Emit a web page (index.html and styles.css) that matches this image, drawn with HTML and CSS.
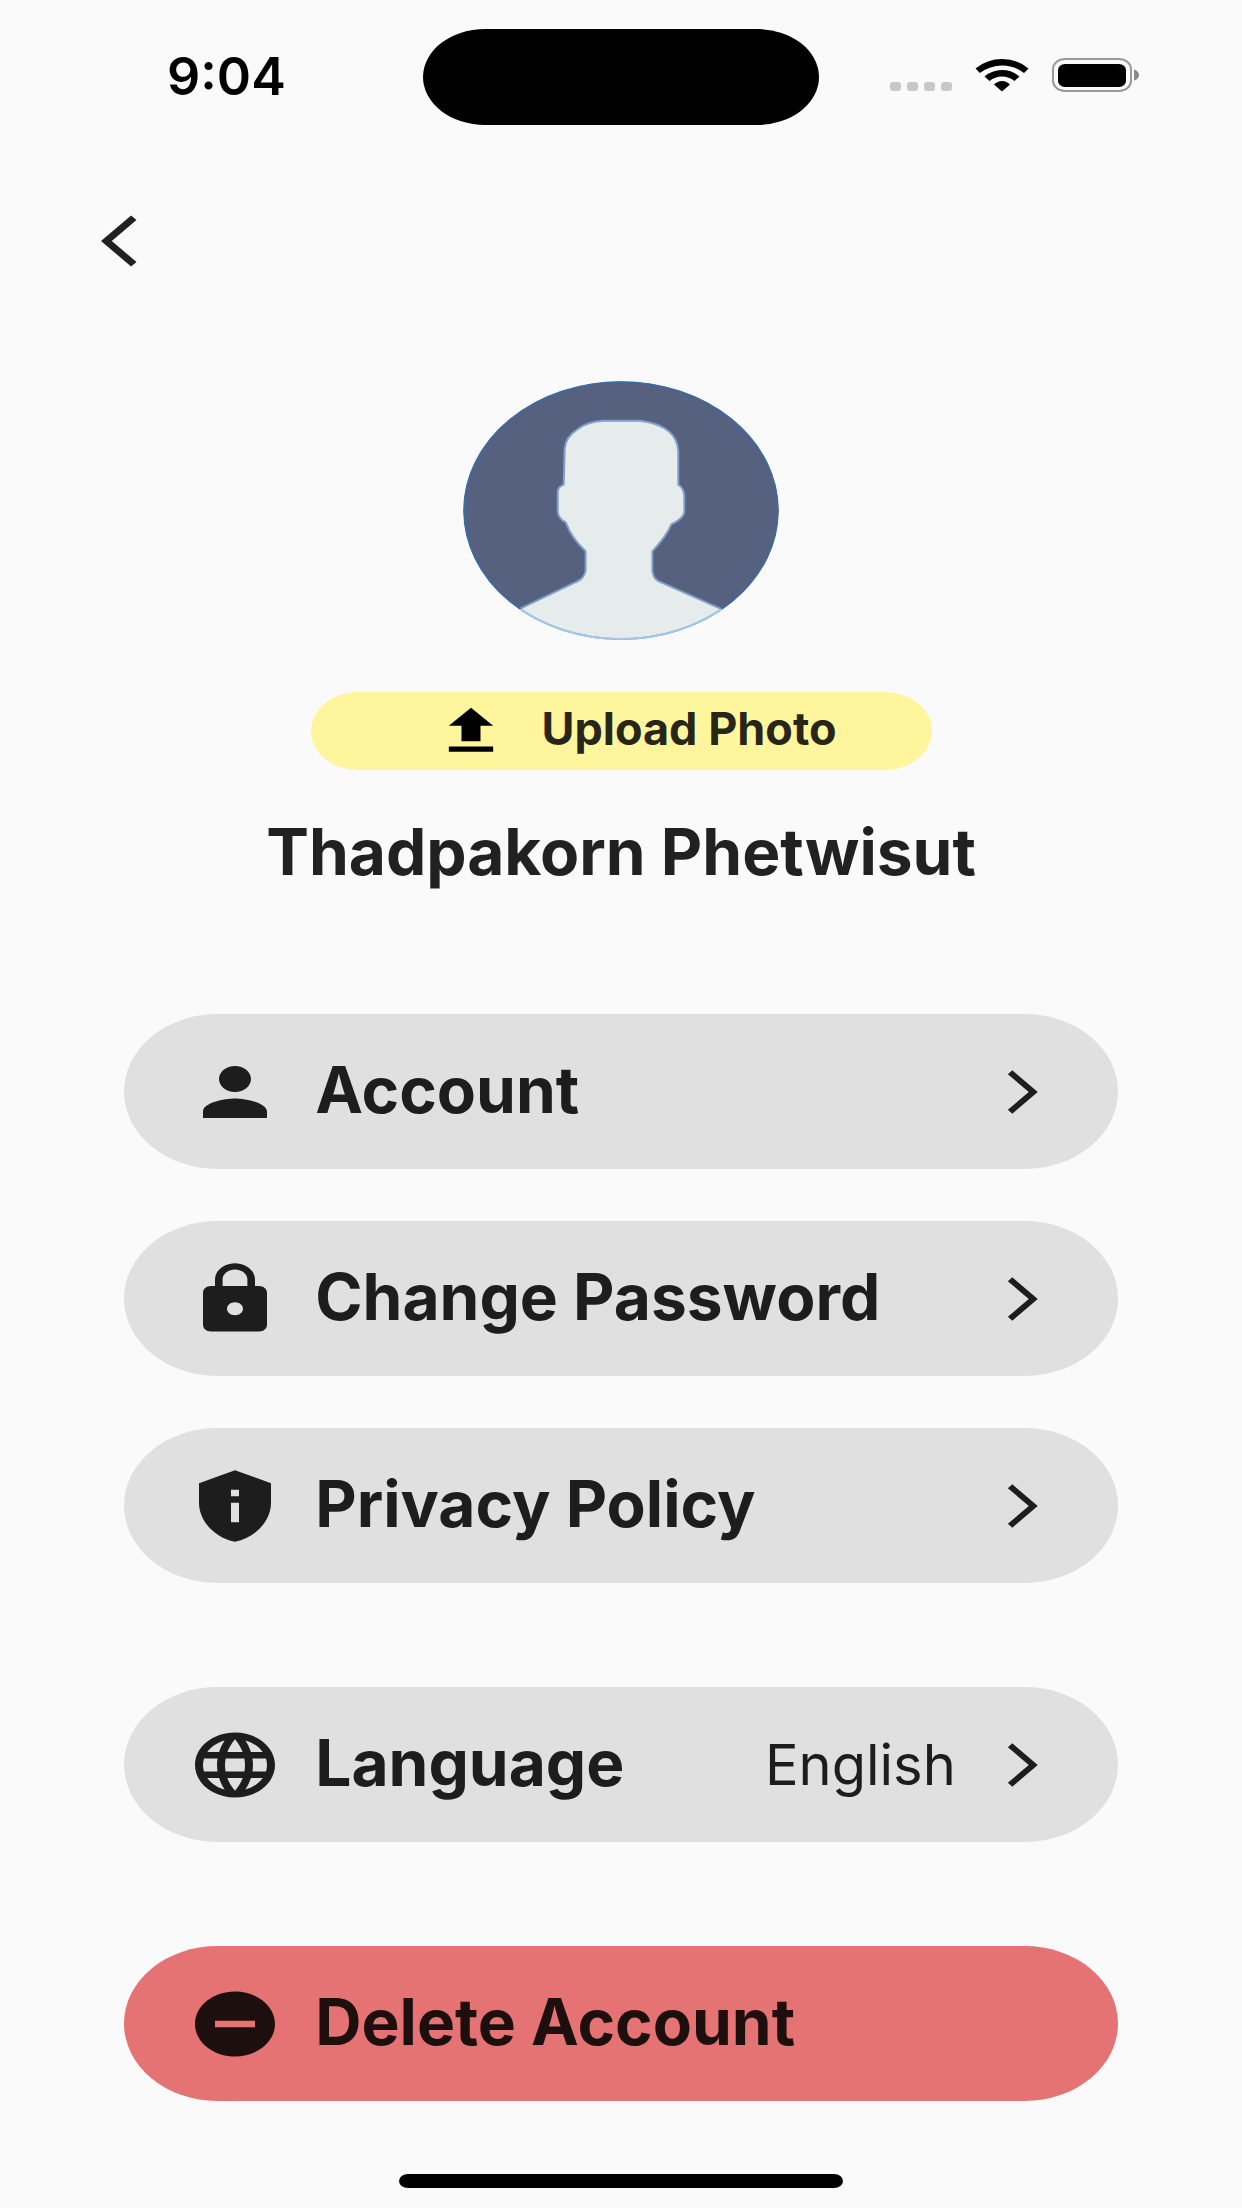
FILE: index.html
```html
<!DOCTYPE html>
<html lang="en">
<head>
<meta charset="utf-8">
<meta name="viewport" content="width=device-width, initial-scale=1">
<title>Profile</title>
<link rel="stylesheet" href="styles.css">
</head>
<body>
<div class="screen">
  <header class="status-bar">
    <time class="clock">9:04</time>
    <div class="island"></div>
    <div class="status-icons">
      <svg class="signal" viewBox="0 0 62 10" aria-hidden="true"><rect x="0" width="11" height="9" rx="3"/><rect x="17" width="11" height="9" rx="3"/><rect x="34" width="11" height="9" rx="3"/><rect x="51" width="11" height="9" rx="3"/></svg>
      <svg class="wifi" viewBox="0 0 54 33" aria-hidden="true"><path d="M0.500 9.500Q12 0 27 0T53.500 9.500L49 14Q39 6.500 27 6.500T5 14Z"/><path d="M9.500 17.500Q17 11 27 11T44.500 17.500L39.500 22Q34 17.500 27 17.500T14.500 22Z"/><path d="M19 25.500Q22.500 22 27 22T35 25.500L27 32.500Z"/></svg>
      <svg class="battery" viewBox="0 0 88 34" aria-hidden="true"><rect x="1" y="1" width="78" height="32" rx="12" ry="10" fill="none" stroke="#999" stroke-width="2"/><rect x="6" y="6" width="68" height="23" rx="7" ry="6"/><path d="M82 11.500Q87 13 87 17T82 22.500Z" fill="#888"/></svg>
    </div>
  </header>

  <nav class="top-nav">
    <button class="back" type="button" aria-label="Back">
      <svg viewBox="0 0 24 24" preserveAspectRatio="none"><path d="M11.670 3.870L9.900 2.100 0 12l9.900 9.900 1.770-1.770L3.540 12z"/></svg>
    </button>
  </nav>

  <main class="content">
    <svg class="avatar" viewBox="0 0 317 260" preserveAspectRatio="none" role="img" aria-label="Profile picture">
      <defs>
        <clipPath id="oval"><ellipse cx="158.500" cy="130" rx="158" ry="129.500"/></clipPath>
        <clipPath id="shoulders"><rect y="229" width="317" height="31"/></clipPath>
      </defs>
      <g clip-path="url(#oval)">
        <rect width="317" height="260" fill="#56607f"/>
        <path fill="#e6ecec" stroke="#7f9fc8" stroke-width="2" d="M102 68Q103 56 114 49Q124 41 140 40H178Q196 42 207 51Q215 58 216 70V104Q222 108 222 116V132Q221 138 209 144Q204 156 190 171V191Q191 198 196 201L264 231V270H52V231L113 202Q122 198 123 190V171Q109 158 103 142Q95 138 95 130V112Q95 106 101 104Z"/>
      </g>
      <ellipse cx="158.500" cy="130" rx="157.500" ry="129" fill="none" stroke="#396ca8" stroke-width="1.500"/>
      <ellipse cx="158.500" cy="130" rx="157.500" ry="129" fill="none" stroke="#a4c8ea" stroke-width="2" clip-path="url(#shoulders)"/>
    </svg>

    <button class="upload" type="button">
      <svg class="upload-icon" viewBox="0 0 24 24" preserveAspectRatio="none" aria-hidden="true"><path d="M5 20h14v-2H5zM5 10h4v6h6v-6h4l-7-7z"/></svg>
      <span>Upload Photo</span>
    </button>

    <h1 class="name">Thadpakorn Phetwisut</h1>

    <div class="menu">
      <div class="group">
        <button class="row" type="button">
          <svg class="icon" viewBox="0 0 24 24" preserveAspectRatio="none" aria-hidden="true"><path d="M12 12c2.210 0 4-1.790 4-4s-1.790-4-4-4-4 1.790-4 4 1.790 4 4 4zm0 2c-2.670 0-8 1.340-8 4v2h16v-2c0-2.660-5.330-4-8-4z"/></svg>
          <span class="label">Account</span>
          <svg class="chevron" viewBox="0 0 24 24" preserveAspectRatio="none" aria-hidden="true"><path d="M6.230 20.230L8 22l10-10L8 2 6.230 3.770 14.460 12z"/></svg>
        </button>
        <button class="row" type="button">
          <svg class="icon" viewBox="0 0 24 24" preserveAspectRatio="none" aria-hidden="true"><path d="M18 8h-1V6c0-2.760-2.240-5-5-5S7 3.240 7 6v2H6c-1.100 0-2 .9-2 2v10c0 1.100.9 2 2 2h12c1.100 0 2-.9 2-2V10c0-1.100-.9-2-2-2zm-6 9c-1.100 0-2-.9-2-2s.9-2 2-2 2 .9 2 2-.9 2-2 2zm3.100-9H8.900V6c0-1.710 1.390-3.100 3.100-3.100s3.100 1.390 3.100 3.100v2z"/></svg>
          <span class="label">Change Password</span>
          <svg class="chevron" viewBox="0 0 24 24" preserveAspectRatio="none" aria-hidden="true"><path d="M6.230 20.230L8 22l10-10L8 2 6.230 3.770 14.460 12z"/></svg>
        </button>
        <button class="row" type="button">
          <svg class="icon" viewBox="0 0 24 24" preserveAspectRatio="none" aria-hidden="true"><path fill-rule="evenodd" d="M12 1L3 5v6c0 5.550 3.840 10.740 9 12 5.160-1.260 9-6.450 9-12V5zM11 7h2v2h-2zM11 11h2v6h-2z"/></svg>
          <span class="label">Privacy Policy</span>
          <svg class="chevron" viewBox="0 0 24 24" preserveAspectRatio="none" aria-hidden="true"><path d="M6.230 20.230L8 22l10-10L8 2 6.230 3.770 14.460 12z"/></svg>
        </button>
      </div>
      <div class="group">
        <button class="row" type="button">
          <svg class="icon" viewBox="0 0 24 24" preserveAspectRatio="none" aria-hidden="true"><path d="M11.990 2C6.470 2 2 6.480 2 12s4.470 10 9.990 10C17.520 22 22 17.520 22 12S17.520 2 11.990 2zm6.930 6h-2.950c-.32-1.250-.78-2.450-1.380-3.560 1.840.63 3.370 1.910 4.330 3.560zM12 4.040c.83 1.200 1.480 2.530 1.910 3.960h-3.820c.43-1.430 1.080-2.760 1.910-3.960zM4.260 14C4.100 13.360 4 12.690 4 12s.1-1.360.26-2h3.380c-.08.66-.14 1.320-.14 2s.06 1.340.14 2H4.260zm.82 2h2.950c.32 1.250.78 2.450 1.380 3.560-1.840-.63-3.370-1.900-4.330-3.560zm2.950-8H5.080c.96-1.660 2.490-2.930 4.330-3.560C8.810 5.550 8.350 6.750 8.030 8zM12 19.960c-.83-1.200-1.480-2.530-1.910-3.960h3.820c-.43 1.430-1.080 2.760-1.910 3.960zM14.340 14H9.660c-.09-.66-.16-1.320-.16-2s.07-1.350.16-2h4.680c.09.65.16 1.320.16 2s-.07 1.340-.16 2zm.25 5.560c.6-1.110 1.060-2.310 1.380-3.560h2.950c-.96 1.650-2.490 2.930-4.330 3.560zM16.360 14c.08-.66.14-1.320.14-2s-.06-1.340-.14-2h3.380c.16.64.26 1.310.26 2s-.1 1.360-.26 2h-3.380z"/></svg>
          <span class="label">Language</span>
          <span class="value">English</span>
          <svg class="chevron" viewBox="0 0 24 24" preserveAspectRatio="none" aria-hidden="true"><path d="M6.230 20.230L8 22l10-10L8 2 6.230 3.770 14.460 12z"/></svg>
        </button>
      </div>
      <div class="group">
        <button class="row danger" type="button">
          <svg class="icon" viewBox="0 0 24 24" preserveAspectRatio="none" aria-hidden="true"><path d="M12 2C6.480 2 2 6.480 2 12s4.480 10 10 10 10-4.480 10-10S17.520 2 12 2zm5 11H7v-2h10v2z"/></svg>
          <span class="label">Delete Account</span>
        </button>
      </div>
    </div>
  </main>

  <div class="home-indicator"></div>
</div>
</body>
</html>
```
FILE: styles.css
```css
* {
  box-sizing: border-box;
}

body {
  margin: 0;
  background: #fafafa;
  color: rgba(0, 0, 0, 0.87);
  font-family: Inter, "Liberation Sans", sans-serif;
}

button {
  border: 0;
  padding: 0;
  background: none;
  color: inherit;
  font: inherit;
  cursor: pointer;
}

svg {
  display: block;
  flex: none;
  fill: currentColor;
}

.screen {
  display: flex;
  flex-direction: column;
  min-height: 100vh;
  padding-bottom: 20px;
}

.status-bar {
  display: grid;
  grid-template-columns: minmax(0, 1fr) 396px minmax(0, 1fr);
  align-items: center;
  padding-top: 29px;
  color: #000;
}

.clock {
  padding-left: 167px;
  font-size: 52px;
  line-height: 60px;
  font-weight: 600;
}

.island {
  height: 96px;
  border-radius: 62px / 48px;
  background: #000;
}

.status-icons {
  display: flex;
  justify-content: flex-end;
  align-items: flex-end;
  gap: 23px;
  padding: 0 102px 4px 0;
}

.signal {
  width: 62px;
  height: 10px;
  fill: #c8c8c8;
}

.wifi {
  width: 54px;
  height: 33px;
}

.battery {
  width: 88px;
  height: 34px;
}

.top-nav {
  padding: 85px 101px 0;
}

.back {
  display: block;
}

.back svg {
  width: 73px;
  height: 62px;
}

.content {
  display: flex;
  flex-direction: column;
  align-items: center;
  padding-top: 109px;
}

.avatar {
  width: 316px;
  height: 259px;
}

.upload {
  display: flex;
  justify-content: center;
  align-items: center;
  gap: 32px;
  width: 50%;
  height: 78px;
  margin-top: 52px;
  padding-left: 28px;
  border-radius: 47px / 39px;
  background: #fff59d;
  font-size: 45px;
  line-height: 52px;
  font-weight: 700;
}

.upload span {
  margin-bottom: 4px;
}

.upload-icon {
  width: 76px;
  height: 62px;
  color: #000;
}

.name {
  margin: 46px 0 0;
  font-size: 64px;
  line-height: 72px;
  font-weight: 700;
}

.menu {
  display: flex;
  flex-direction: column;
  gap: 104px;
  width: 80%;
  margin-top: 126px;
}

.group {
  display: flex;
  flex-direction: column;
  gap: 52px;
}

.row {
  display: flex;
  align-items: center;
  width: 100%;
  height: 155px;
  padding: 0 65px 0 63px;
  border-radius: 94px / 78px;
  background: #e0e0e0;
  text-align: left;
}

.danger {
  background: #e57373;
}

.icon {
  width: 96px;
  height: 78px;
}

.label {
  flex: 1;
  margin: 0 0 4px 32px;
  font-size: 64px;
  line-height: 72px;
  font-weight: 700;
}

.value {
  margin-right: 36px;
  font-size: 56px;
  line-height: 72px;
}

.chevron {
  width: 61px;
  height: 52px;
}

.home-indicator {
  width: 444px;
  max-width: 60%;
  height: 14px;
  margin: auto auto 0;
  border-radius: 9px / 7px;
  background: #000;
}
```
